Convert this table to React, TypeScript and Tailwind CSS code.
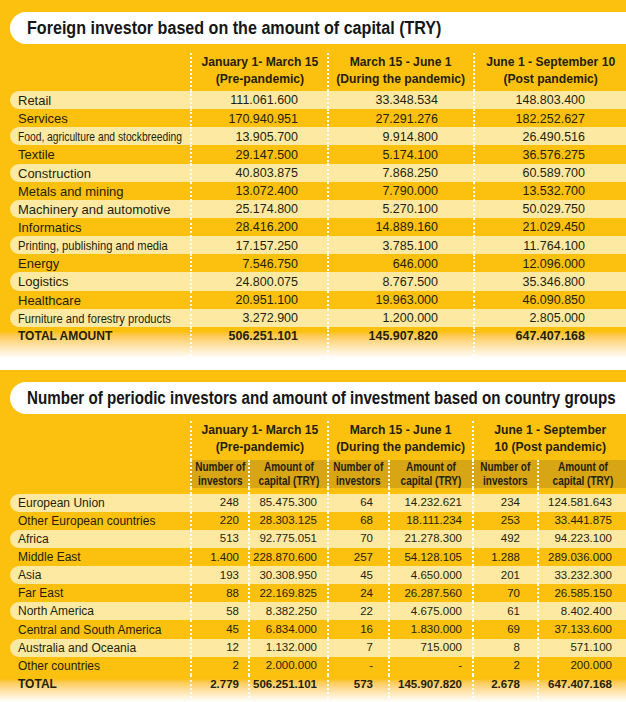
import React from "react";

type CapitalRow = { label: string; values: string[]; squeeze?: string };
type CountryRow = { label: string; values: string[] };

const capitalRows: CapitalRow[] = [
  { label: "Retail", values: ["111.061.600", "33.348.534", "148.803.400"] },
  { label: "Services", values: ["170.940.951", "27.291.276", "182.252.627"] },
  {
    label: "Food, agriculture and stockbreeding",
    values: ["13.905.700", "9.914.800", "26.490.516"],
    squeeze: "scale-x-[0.79]",
  },
  { label: "Textile", values: ["29.147.500", "5.174.100", "36.576.275"] },
  { label: "Construction", values: ["40.803.875", "7.868.250", "60.589.700"] },
  { label: "Metals and mining", values: ["13.072.400", "7.790.000", "13.532.700"] },
  { label: "Machinery and automotive", values: ["25.174.800", "5.270.100", "50.029.750"] },
  { label: "Informatics", values: ["28.416.200", "14.889.160", "21.029.450"] },
  {
    label: "Printing, publishing and media",
    values: ["17.157.250", "3.785.100", "11.764.100"],
    squeeze: "scale-x-[0.86]",
  },
  { label: "Energy", values: ["7.546.750", "646.000", "12.096.000"] },
  { label: "Logistics", values: ["24.800.075", "8.767.500", "35.346.800"] },
  { label: "Healthcare", values: ["20.951.100", "19.963.000", "46.090.850"] },
  {
    label: "Furniture and forestry products",
    values: ["3.272.900", "1.200.000", "2.805.000"],
    squeeze: "scale-x-[0.86]",
  },
];

const countryRows: CountryRow[] = [
  { label: "European Union", values: ["248", "85.475.300", "64", "14.232.621", "234", "124.581.643"] },
  { label: "Other European countries", values: ["220", "28.303.125", "68", "18.111.234", "253", "33.441.875"] },
  { label: "Africa", values: ["513", "92.775.051", "70", "21.278.300", "492", "94.223.100"] },
  { label: "Middle East", values: ["1.400", "228.870.600", "257", "54.128.105", "1.288", "289.036.000"] },
  { label: "Asia", values: ["193", "30.308.950", "45", "4.650.000", "201", "33.232.300"] },
  { label: "Far East", values: ["88", "22.169.825", "24", "26.287.560", "70", "26.585.150"] },
  { label: "North America", values: ["58", "8.382.250", "22", "4.675.000", "61", "8.402.400"] },
  { label: "Central and South America", values: ["45", "6.834.000", "16", "1.830.000", "69", "37.133.600"] },
  { label: "Australia and Oceania", values: ["12", "1.132.000", "7", "715.000", "8", "571.100"] },
  { label: "Other countries", values: ["2", "2.000.000", "-", "-", "2", "200.000"] },
];

const countryTotals = ["2.779", "506.251.101", "573", "145.907.820", "2.678", "647.407.168"];

// right padding of each value column, so numbers end where the print has them
const capitalPads = ["pr-[29px]", "pr-[35px]", "pr-[41px]"];
const countryPads = ["pr-[9px]", "pr-[10px]", "pr-[15px]", "pr-[10px]", "pr-[17px]", "pr-[14px]"];

const dots = "border-l-2 border-dotted border-white";

const TitlePill = ({ text, squeeze }: { text: string; squeeze: string }) => (
  <div className="ml-[10px] flex h-[32px] items-center overflow-hidden rounded-l-full bg-white pl-[17px]">
    <span
      className={`inline-block origin-left whitespace-nowrap text-[17.5px] font-bold text-[#161616] ${squeeze}`}
    >
      {text}
    </span>
  </div>
);

const GroupHead = ({ top, bottom }: { top: string; bottom: string }) => (
  <div className={`${dots} flex justify-center`}>
    <span className="inline-block scale-x-[0.9] whitespace-nowrap text-center text-[13.5px] font-bold leading-[17px]">
      {top}
      <br />
      {bottom}
    </span>
  </div>
);

const CapitalTable = () => (
  <section className="bg-[#fcc10f] pt-3">
    <TitlePill text="Foreign investor based on the amount of capital (TRY)" squeeze="scale-x-[0.92]" />
    {/* column heads */}
    <div className="grid h-[47px] grid-cols-[190px_137px_146px_153px] pt-[9px]">
      <div />
      <GroupHead top="January 1- March 15" bottom="(Pre-pandemic)" />
      <GroupHead top="March 15 - June 1" bottom="(During the pandemic)" />
      <GroupHead top="June 1 - September 10" bottom="(Post pandemic)" />
    </div>
    {capitalRows.map((row, i) => (
      <div key={row.label} className="pl-[10px]">
        <div
          className={`grid h-[18.15px] grid-cols-[180px_137px_146px_153px] rounded-l-full ${
            i % 2 === 0 ? "bg-[#fee9a2]" : ""
          }`}
        >
          <div className="flex items-center whitespace-nowrap pl-2 text-[13px]">
            <span className={`inline-block origin-left ${row.squeeze ?? ""}`}>{row.label}</span>
          </div>
          {row.values.map((v, j) => (
            <div key={j} className={`${dots} flex items-center justify-end text-[12.5px] ${capitalPads[j]}`}>
              {v}
            </div>
          ))}
        </div>
      </div>
    ))}
    {/* total, fading out */}
    <div className="grid h-[33px] grid-cols-[190px_137px_146px_153px] bg-linear-to-b from-[#fcc10f] from-15% to-white to-95% font-bold leading-[19px]">
      <div className="pl-[18px] text-[12px]">TOTAL AMOUNT</div>
      <div className={`${dots} text-right text-[12.5px] ${capitalPads[0]}`}>506.251.101</div>
      <div className={`${dots} text-right text-[12.5px] ${capitalPads[1]}`}>145.907.820</div>
      <div className={`${dots} text-right text-[12.5px] ${capitalPads[2]}`}>647.407.168</div>
    </div>
  </section>
);

const SubHead = ({ top, bottom }: { top: string; bottom: string }) => (
  <div className={`${dots} flex items-center justify-center bg-[#d8a514] text-center`}>
    <span className="inline-block scale-x-[0.8] whitespace-nowrap text-[12.5px] font-bold leading-[14px]">
      {top}
      <br />
      {bottom}
    </span>
  </div>
);

const CountryTable = () => (
  <section className="bg-[#fcc10f] pt-3">
    <TitlePill
      text="Number of periodic investors and amount of investment based on country groups"
      squeeze="scale-x-[0.865]"
    />
    <div className="grid h-[46px] grid-cols-[190px_137px_145px_154px] pt-[7px]">
      <div />
      <GroupHead top="January 1- March 15" bottom="(Pre-pandemic)" />
      <GroupHead top="March 15 - June 1" bottom="(During the pandemic)" />
      <GroupHead top="June 1 - September" bottom="10 (Post pandemic)" />
    </div>
    <div className="grid h-[28px] grid-cols-[190px_58px_79px_61px_84px_65px_89px]">
      <div />
      <SubHead top="Number of" bottom="investors" />
      <SubHead top="Amount of" bottom="capital (TRY)" />
      <SubHead top="Number of" bottom="investors" />
      <SubHead top="Amount of" bottom="capital (TRY)" />
      <SubHead top="Number of" bottom="investors" />
      <SubHead top="Amount of" bottom="capital (TRY)" />
    </div>
    <div className="grid h-[6px] grid-cols-[190px_58px_79px_61px_84px_65px_89px]">
      <div />
      {countryPads.map((p, j) => (
        <div key={j} className={dots} />
      ))}
    </div>
    {countryRows.map((row, i) => (
      <div key={row.label} className="pl-[10px]">
        <div
          className={`grid h-[18.1px] grid-cols-[180px_58px_79px_61px_84px_65px_89px] rounded-l-full ${
            i % 2 === 0 ? "bg-[#fee9a2]" : ""
          }`}
        >
          <div className="flex items-center whitespace-nowrap pl-2 text-[12px]">{row.label}</div>
          {row.values.map((v, j) => (
            <div key={j} className={`${dots} flex items-center justify-end text-[11.5px] ${countryPads[j]}`}>
              {v}
            </div>
          ))}
        </div>
      </div>
    ))}
    <div className="grid h-[27px] grid-cols-[190px_58px_79px_61px_84px_65px_89px] bg-linear-to-b from-[#fcc10f] from-15% to-white font-bold leading-[19px]">
      <div className="pl-[18px] text-[12px]">TOTAL</div>
      {countryTotals.map((v, j) => (
        <div key={j} className={`${dots} text-right text-[11.5px] ${countryPads[j]}`}>
          {v}
        </div>
      ))}
    </div>
  </section>
);

export default function App() {
  return (
    <div className="h-[702px] w-[626px] overflow-hidden bg-white font-['Liberation_Sans',Arial,sans-serif] text-[#241e0c]">
      <CapitalTable />
      <div className="h-[10px]" />
      <CountryTable />
    </div>
  );
}
